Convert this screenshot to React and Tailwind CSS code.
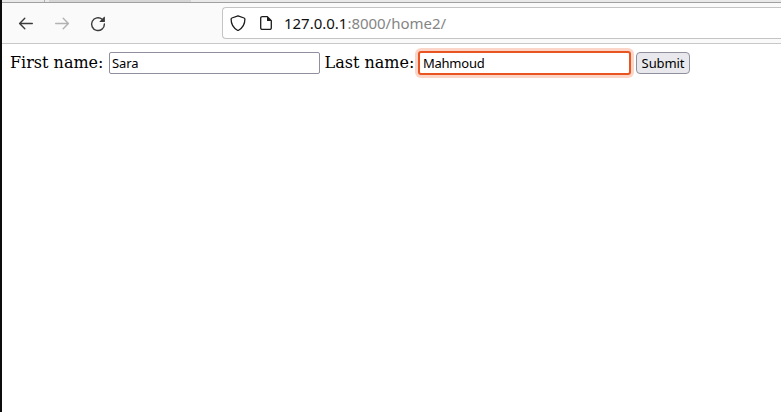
function BackIcon() {
  return (
    <svg className="h-4 w-4" viewBox="0 0 16 16" fill="none" stroke="currentColor" strokeWidth="1.4" strokeLinecap="round" strokeLinejoin="round">
      <path d="M14.3 7.5H1.7M6.8 2.3 1.6 7.5l5.2 5.2" />
    </svg>
  );
}

function ForwardIcon() {
  return (
    <svg className="h-4 w-4" viewBox="0 0 16 16" fill="none" stroke="currentColor" strokeWidth="1.4" strokeLinecap="round" strokeLinejoin="round">
      <path d="M1.700 7.5h12.600M9.200 2.300l5.200 5.200-5.200 5.200" />
    </svg>
  );
}

function ReloadIcon() {
  return (
    <svg className="h-4 w-4" viewBox="0 0 16 16" fill="none">
      <path d="M12.2 3.3A6.4 6.4 0 1 0 14.4 8" stroke="currentColor" strokeWidth="1.4" strokeLinecap="round" />
      <path d="M14.9 1v4.600a.5.5 0 0 1-.5.5H9.900a.4.4 0 0 1-.3-.7L14.200.8a.4.4 0 0 1 .7.2z" fill="currentColor" />
    </svg>
  );
}

function ShieldIcon() {
  return (
    <svg className="h-4 w-4" viewBox="0 0 16 16" fill="none" stroke="currentColor" strokeWidth="1.3" strokeLinejoin="round">
      <path d="M8 .8 14.1 3c.5.2.8.6.8 1.1 0 5-2.1 8.8-6.3 11.1a1.2 1.2 0 0 1-1.2 0C3.2 12.9 1.100 9.1 1.100 4.1c0-.5.3-.9.8-1.1z" />
    </svg>
  );
}

function PageIcon() {
  return (
    <svg className="h-4 w-4" viewBox="0 0 16 16" fill="none">
      <path d="M9.3 1.6H4.2a1.5 1.5 0 0 0-1.5 1.5v9.8a1.5 1.5 0 0 0 1.5 1.5h7.6a1.5 1.5 0 0 0 1.5-1.5V5.6z" stroke="currentColor" strokeWidth="1.3" strokeLinejoin="round" />
      <path d="M9 1.3v4.1c0 .4.2.6.6.6h4z" fill="currentColor" />
    </svg>
  );
}

export default function App() {
  return (
    <div className="flex h-[412px] w-[781px] overflow-hidden bg-white">
      <div className="w-0.5 shrink-0 bg-[#0c0c0c]" />
      <div className="flex min-w-0 flex-1 flex-col">
        <div className="flex h-[3px] shrink-0 border-b border-[#a0a0a0] bg-[#e9e9e9]">
          <div className="w-[43px] border-r border-[#b0b0b0]" />
          <div className="ml-1 w-[142px] bg-[#d6d6d6]" />
        </div>
        <div className="flex h-[41px] shrink-0 border-b border-[#c8c8c8] bg-[#fafafa]">
          <nav className="flex w-[220px] shrink-0 gap-5 pt-[13px] pl-4 text-[#3a3a3a]">
            <BackIcon />
            <span className="text-[#b2b2b2]"><ForwardIcon /></span>
            <ReloadIcon />
          </nav>
          <div className="mt-1 flex h-8 flex-1 items-center rounded-l border border-r-0 border-[#c4c4c4] bg-white pl-[7px] font-['Noto_Sans',sans-serif] text-[15px] text-[#858585]">
            <span className="flex gap-3 text-[#1c1c1c]"><ShieldIcon /><PageIcon /></span>
            <span className="ml-2.5 whitespace-nowrap leading-5 tracking-[-0.02px]"><span className="text-[#101010]">127.0.0.1</span>:8000/home2/</span>
          </div>
        </div>
        <form className="flex items-start pt-2 pl-2 font-['DejaVu_Serif',serif] text-[16px] leading-[21px] text-black">
          <span className="w-[99px] shrink-0 whitespace-nowrap">First name:</span>
          <input defaultValue="Sara" className="h-[22px] w-[211px] rounded-xs border border-[#8f8f9d] bg-white px-0.5 font-['Noto_Sans',sans-serif] text-[13px] tracking-[-0.1px] outline-none" />
          <span className="ml-[4.5px] w-[93.5px] shrink-0 whitespace-nowrap">Last name:</span>
          <input defaultValue="Mahmoud" className="-mt-px h-6 w-[213px] rounded-[3px] border-2 border-[#e95420] bg-white px-[3px] font-['Noto_Sans',sans-serif] text-[13px] tracking-[-0.25px] shadow-[0_0_0_3px_#fbd5c8] outline-none" />
          <button type="button" className="ml-[5px] h-[22px] w-[54px] rounded border border-[#8f8f9d] bg-[#e9e9ed] font-['Noto_Sans',sans-serif] text-[13px] leading-5 tracking-[-0.1px]">Submit</button>
        </form>
      </div>
    </div>
  );
}
